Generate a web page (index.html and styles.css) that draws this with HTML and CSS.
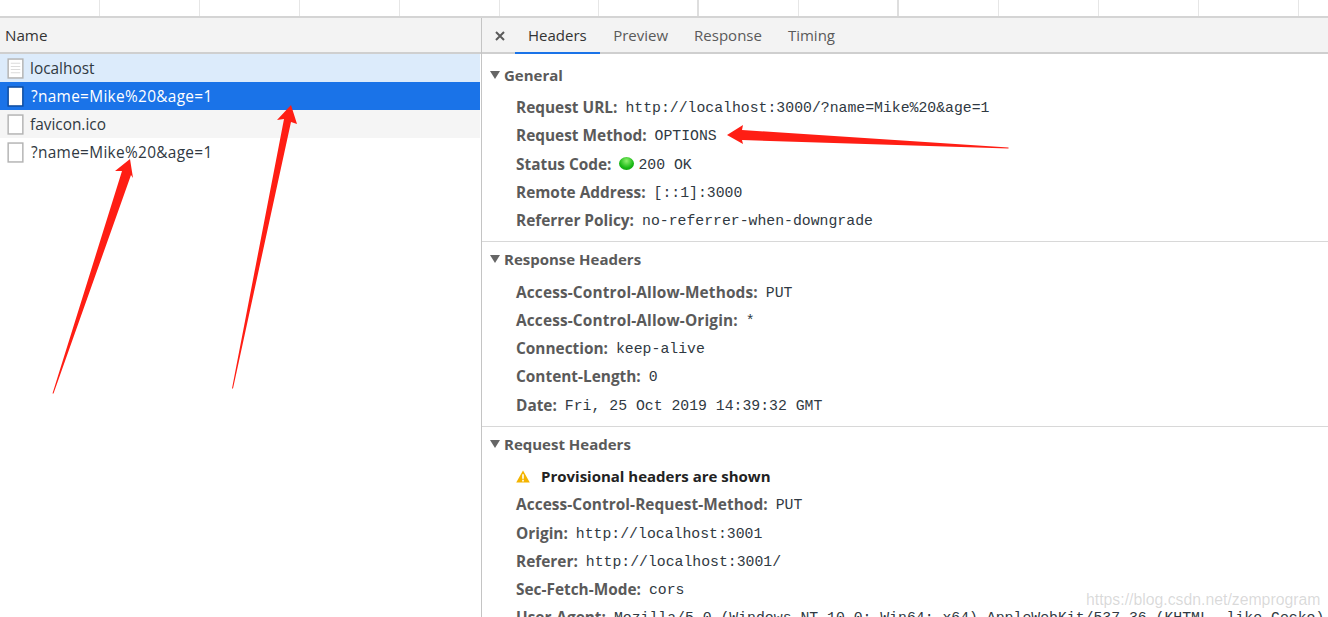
FILE: index.html
```html
<!DOCTYPE html>
<html lang="en">
<head>
<meta charset="utf-8">
<title>Network</title>
<link rel="stylesheet" href="styles.css">
</head>
<body>
<div class="app">
  <div class="overview">
    <i class="tick"></i><i class="tick"></i><i class="tick"></i><i class="tick"></i><i class="tick"></i><i class="tick"></i><i class="tick tick-strong"></i><i class="tick"></i><i class="tick tick-strong"></i><i class="tick"></i><i class="tick"></i><i class="tick"></i><i class="tick"></i>
  </div>
  <div class="panes">
    <section class="list">
      <div class="list-head">Name</div>
      <div class="row row-hover">
        <svg class="file" viewBox="0 0 16 20"><rect x="1" y="1" width="14" height="18" fill="#fff" stroke="#b4b4b4" stroke-width="1.4"/><path d="M3.5 5h9M3.5 8h9M3.5 11h9M3.5 14h9" stroke="#dcdcdc"/></svg>
        <span>localhost</span>
      </div>
      <div class="row row-selected">
        <svg class="file" viewBox="0 0 16 20"><rect x="1" y="1" width="14" height="18" fill="#fff" stroke="#0f4c9e" stroke-width="1.4"/></svg>
        <span class="query">?name=Mike%20&amp;age=1</span>
      </div>
      <div class="row row-alt">
        <svg class="file" viewBox="0 0 16 20"><rect x="1" y="1" width="14" height="18" fill="#fff" stroke="#b4b4b4" stroke-width="1.4"/></svg>
        <span>favicon.ico</span>
      </div>
      <div class="row">
        <svg class="file" viewBox="0 0 16 20"><rect x="1" y="1" width="14" height="18" fill="#fff" stroke="#b4b4b4" stroke-width="1.4"/></svg>
        <span class="query">?name=Mike%20&amp;age=1</span>
      </div>
    </section>
    <section class="detail">
      <div class="tabs">
        <svg class="close" viewBox="0 0 10 10"><path d="M1 1l8 8M9 1l-8 8" stroke="#5a5a5a" stroke-width="2"/></svg>
        <div class="tab tab-active">Headers</div>
        <div class="tab">Preview</div>
        <div class="tab">Response</div>
        <div class="tab">Timing</div>
      </div>
      <div class="group group-first">
        <div class="title"><i class="caret"></i>General</div>
        <div class="kv"><b>Request URL:</b><code>http://localhost:3000/?name=Mike%20&amp;age=1</code></div>
        <div class="kv"><b>Request Method:</b><code>OPTIONS</code></div>
        <div class="kv"><b>Status Code:</b><i class="dot"></i><code class="near">200 OK</code></div>
        <div class="kv"><b>Remote Address:</b><code>[::1]:3000</code></div>
        <div class="kv"><b>Referrer Policy:</b><code>no-referrer-when-downgrade</code></div>
      </div>
      <div class="group">
        <div class="title"><i class="caret"></i>Response Headers</div>
        <div class="kv"><b class="wide">Access-Control-Allow-Methods:</b><code>PUT</code></div>
        <div class="kv"><b class="wide">Access-Control-Allow-Origin:</b><code>*</code></div>
        <div class="kv"><b>Connection:</b><code>keep-alive</code></div>
        <div class="kv"><b>Content-Length:</b><code>0</code></div>
        <div class="kv"><b>Date:</b><code>Fri, 25 Oct 2019 14:39:32 GMT</code></div>
      </div>
      <div class="group">
        <div class="title"><i class="caret"></i>Request Headers</div>
        <div class="kv warn">
          <svg class="warn-icon" viewBox="0 0 14 13"><path d="M7 0.5L13.8 12.5H0.2Z" fill="#f4b400"/><path d="M7 4.2v4.6M7 9.8v1.6" stroke="#fff" stroke-width="1.6"/></svg>
          <strong>Provisional headers are shown</strong>
        </div>
        <div class="kv"><b class="wide-sm">Access-Control-Request-Method:</b><code>PUT</code></div>
        <div class="kv"><b>Origin:</b><code>http://localhost:3001</code></div>
        <div class="kv"><b>Referer:</b><code>http://localhost:3001/</code></div>
        <div class="kv"><b>Sec-Fetch-Mode:</b><code>cors</code></div>
        <div class="kv"><b>User-Agent:</b><code>Mozilla/5.0 (Windows NT 10.0; Win64; x64) AppleWebKit/537.36 (KHTML, like Gecko)</code></div>
      </div>
    </section>
  </div>
  <svg class="arrows" viewBox="0 0 1328 617">
    <path fill="#ff1e14" d="M52.5 393.5L53.5 393.5L131 175L133 178L130 159L115 171L122 171Z"/>
    <path fill="#ff1e14" d="M232 388.5L233 388.5L291 122L297 124L291 105L277 120L284 119Z"/>
    <path fill="#ff1e14" d="M1008.5 147.5L1008.5 148.5L742 140L743 144L727 135L743 125L742 130Z"/>
  </svg>
  <div class="watermark">https://blog.csdn.net/zemprogram</div>
</div>
</body>
</html>
```
FILE: styles.css
```css
* { box-sizing: border-box; }
html, body { margin: 0; padding: 0; height: 100%; overflow: hidden; background: #fff; }
body { font-family: "Open Sans", "Noto Sans", sans-serif; color: #303942; }
.app { position: relative; width: 1328px; height: 617px; overflow: hidden; }

.overview { display: flex; height: 18px; border-bottom: 2px solid #d4d4d4; }
.tick { flex: 0 0 100px; height: 16px; border-right: 1px solid #e6e6e6; margin-left: -0.1px; }
.tick-strong { border-right: 2px solid #dedede; }

.panes { display: flex; height: 599px; }
.list { flex: 0 0 481px; }
.list-head { height: 36px; background: #f3f3f3; border-bottom: 2px solid #cfcfcf; padding-left: 5px; font-size: 15.2px; line-height: 34px; color: #333; }
.row { display: flex; align-items: center; height: 28px; margin-right: 1px; padding-left: 7px; font-size: 15.4px; color: #303942; }
.row span { margin-left: 6px; }
.row .query { margin-left: 7px; letter-spacing: 0.32px; }
.file { width: 17px; height: 21px; flex: none; }
.row-hover { background: #dcebfb; }
.row-selected { background: #1a73e8; color: #fff; }
.row-alt { background: #f5f5f5; }

.detail { flex: 1; min-width: 0; border-left: 1px solid #c4c4c4; white-space: nowrap; }
.tabs { display: flex; align-items: stretch; height: 36px; background: #f3f3f3; border-bottom: 2px solid #cfcfcf; padding-left: 13px; font-size: 15px; color: #5a5a5a; }
.close { width: 10px; height: 10px; margin: 13px 10px 0 0; flex: none; }
.tab { padding: 0 13px; line-height: 35px; }
.tab-active { color: #333; border-bottom: 2px solid #1a73e8; height: 36px; padding: 0 13.5px 0 13px; }

.group { padding: 3px 0 6px; border-bottom: 1px solid #d8d8d8; font-size: 15.4px; }
.group-first { padding-top: 7px; }
.title { display: flex; align-items: center; height: 28px; padding-left: 8px; font-size: 15px; font-weight: 700; color: #5a5a5a; margin-bottom: 5.2px; }
.caret { width: 0; height: 0; margin-right: 4px; border-left: 5px solid transparent; border-right: 5px solid transparent; border-top: 8px solid #666; }
.kv { display: flex; align-items: center; height: 28.25px; line-height: 28.25px; padding-left: 34px; }
.kv b { color: #5a5a5a; font-weight: 700; margin-right: 8px; }
.kv .wide { letter-spacing: 0.15px; }
.kv .wide-sm { letter-spacing: 0.07px; }
code { font-family: "Liberation Mono", monospace; font-size: 14.8px; color: #303942; }
.near { margin-left: 4px; }
.dot { width: 15px; height: 13px; margin-top: -3px; border-radius: 50%; background: radial-gradient(circle at 50% 30%, #8ef06f, #18b814 60%, #0c8f0c); }
.warn { margin: -1px 0 1px; }
.warn strong { color: #222; font-size: 15px; font-weight: 700; margin-left: 11px; }
.warn-icon { width: 14px; height: 13px; flex: none; }

.arrows { position: absolute; left: 0; top: 0; width: 1328px; height: 617px; pointer-events: none; }
.watermark { position: absolute; left: 1086px; top: 591px; font-family: "Liberation Sans", sans-serif; font-size: 15.8px; color: rgba(120,120,120,0.28); }
```
